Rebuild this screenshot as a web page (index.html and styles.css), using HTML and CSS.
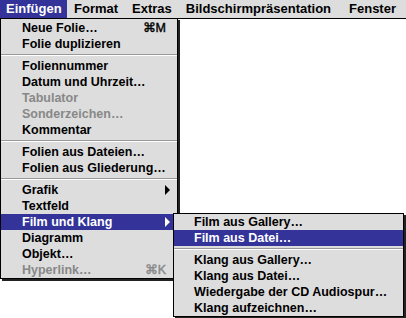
FILE: index.html
```html
<!DOCTYPE html>
<html lang="de">
<head>
    <meta charset="UTF-8">
    <title>Einfügen</title>
    <link rel="stylesheet" href="styles.css">
</head>
<body>
    <div class="menubar">
        <span class="title active">Einfügen</span>
        <span class="title">Format</span>
        <span class="title">Extras</span>
        <span class="title">Bildschirmpräsentation</span>
        <span class="title">Fenster</span>
    </div>

    <div class="menu main-menu">
        <div class="item"><span>Neue Folie…</span><span class="key">⌘M</span></div>
        <div class="item"><span>Folie duplizieren</span></div>
        <div class="sep"></div>
        <div class="item"><span>Foliennummer</span></div>
        <div class="item"><span>Datum und Uhrzeit…</span></div>
        <div class="item disabled"><span>Tabulator</span></div>
        <div class="item disabled"><span>Sonderzeichen…</span></div>
        <div class="item"><span>Kommentar</span></div>
        <div class="sep"></div>
        <div class="item"><span>Folien aus Dateien…</span></div>
        <div class="item"><span>Folien aus Gliederung…</span></div>
        <div class="sep"></div>
        <div class="item"><span>Grafik</span><span class="arrow"></span></div>
        <div class="item"><span>Textfeld</span></div>
        <div class="item selected"><span>Film und Klang</span><span class="arrow"></span></div>
        <div class="item"><span>Diagramm</span></div>
        <div class="item"><span>Objekt…</span></div>
        <div class="item disabled"><span>Hyperlink…</span><span class="key">⌘K</span></div>
    </div>

    <div class="menu sub-menu">
        <div class="item"><span>Film aus Gallery…</span></div>
        <div class="item selected"><span>Film aus Datei…</span></div>
        <div class="sep"></div>
        <div class="item"><span>Klang aus Gallery…</span></div>
        <div class="item"><span>Klang aus Datei…</span></div>
        <div class="item"><span>Wiedergabe der CD Audiospur…</span></div>
        <div class="item"><span>Klang aufzeichnen…</span></div>
    </div>
</body>
</html>
```

FILE: styles.css
```css
body {
    margin: 0;
    background-color: #fff;
    font-family: "Liberation Sans", Arial, sans-serif;
    font-weight: bold;
    font-size: 12.5px;
    color: #000;
}
.menubar {
    display: flex;
    height: 18px;
    line-height: 18px;
    font-size: 13px;
    white-space: nowrap;
    background-color: #dddddd;
    border-bottom: 1px solid #000;
}
.menubar .title {
    padding: 0 7px;
}
.menubar .title:first-child {
    padding: 0 6px;
    width: 55px;
}
.menubar .title:last-child {
    padding-left: 11px;
}
.menubar .active {
    background-color: #333399;
    color: #fff;
}
.menu {
    position: absolute;
    background-color: #dddddd;
    border: 1px solid #000;
    box-shadow: 2px 2px 0 #222;
}
.main-menu {
    left: 0;
    top: 18px;
    width: 176px;
    padding-top: 1px;
}
.sub-menu {
    left: 173px;
    top: 213px;
    width: 229px;
}
.item {
    display: flex;
    justify-content: space-between;
    align-items: center;
    height: 16px;
    line-height: 16px;
    padding: 0 11px 0 21px;
    white-space: nowrap;
}
.sub-menu .item {
    padding-left: 20px;
}
.item.disabled {
    color: #888;
}
.item.selected {
    background-color: #333399;
    color: #fff;
}
.key {
    font-weight: normal;
    -webkit-text-stroke: 0.4px currentColor;
}
.sep {
    height: 0;
    margin: 2px 0;
    border-top: 1px solid #999;
    border-bottom: 1px solid #fff;
}
.arrow {
    width: 0;
    height: 0;
    margin-right: -4px;
    border-top: 5px solid transparent;
    border-bottom: 5px solid transparent;
    border-left: 5px solid currentColor;
}
```
